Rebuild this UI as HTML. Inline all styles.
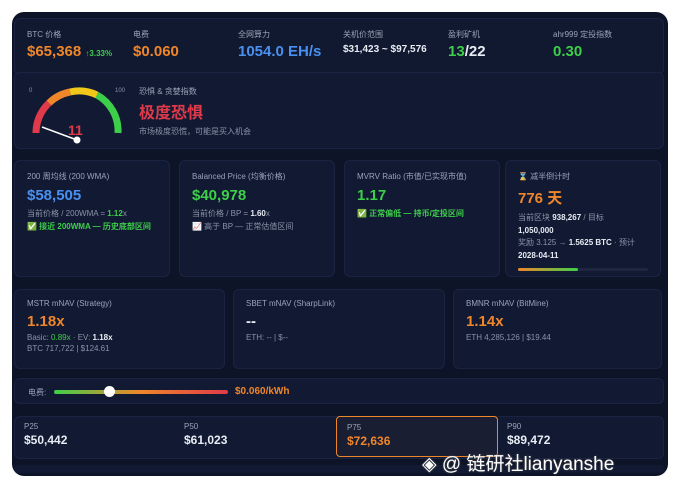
<!DOCTYPE html><html><head><meta charset="utf-8"><style>
*{box-sizing:border-box;margin:0;padding:0}
body{width:680px;height:489px;background:#fff;font-family:"Liberation Sans","Noto Sans CJK SC",sans-serif;position:relative;overflow:hidden}
.wrap{position:absolute;left:12px;top:12px;width:656px;height:464px;background:#0e1428;border-radius:12px}
.card{position:absolute;background:#121a33;border:1px solid #1a2442;border-radius:6px}
.lbl{font-size:8px;color:#9aa3b8}
.s{font-size:8px;color:#8a93a8}
.w{color:#e8ecf4;font-weight:bold}
.o{color:#f0862a}.g{color:#3ecf4a}.b{color:#4a90f0}.r{color:#e03a4a}
.big{font-size:15px;font-weight:bold}
.ab{position:absolute}
</style></head><body>
<div class="wrap">
<div class="card" style="left:2px;top:6px;width:650px;height:57px;background:#111930">
 <div class="ab" style="left:12px;top:10px"><div class="lbl">BTC 价格</div><div class="big o" style="margin-top:3px">$65,368 <span class="g" style="font-size:8px">↑3.33%</span></div></div>
 <div class="ab" style="left:118px;top:10px"><div class="lbl">电费</div><div class="big o" style="margin-top:3px">$0.060</div></div>
 <div class="ab" style="left:223px;top:10px"><div class="lbl">全网算力</div><div class="big b" style="margin-top:3px">1054.0 EH/s</div></div>
 <div class="ab" style="left:328px;top:10px"><div class="lbl">关机价范围</div><div class="w" style="font-size:10px;margin-top:4px">$31,423 ~ $97,576</div></div>
 <div class="ab" style="left:433px;top:10px"><div class="lbl">盈利矿机</div><div class="big" style="margin-top:3px"><span class="g">13</span><span class="w">/22</span></div></div>
 <div class="ab" style="left:538px;top:10px"><div class="lbl">ahr999 定投指数</div><div class="big g" style="margin-top:3px">0.30</div></div>
</div>
<div class="card" style="left:2px;top:60px;width:650px;height:77px">
 <svg class="ab" style="left:0;top:0" width="130" height="76">
  <g fill="none" stroke-width="7">
   <path d="M21 60 A41 41 0 0 1 34 30" stroke="#e03a4a"/>
   <path d="M34 30 A41 41 0 0 1 55 19" stroke="#f0862a"/>
   <path d="M55 19 A41 41 0 0 1 82 22" stroke="#f0c81a"/>
   <path d="M82 22 A41 41 0 0 1 103 60" stroke="#3ecf4a"/>
  </g>
  <line x1="27" y1="54" x2="62" y2="67" stroke="#fff" stroke-width="1.5"/>
  <circle cx="62" cy="67" r="3.5" fill="#fff"/>
  <text x="14" y="19" font-size="6" fill="#8a93a8" font-family="Liberation Sans">0</text>
  <text x="100" y="19" font-size="6" fill="#8a93a8" font-family="Liberation Sans">100</text>
  <text x="53" y="62" font-size="14" font-weight="bold" fill="#e03a4a" font-family="Liberation Sans">11</text>
 </svg>
 <div class="ab" style="left:124px;top:13px"><div class="lbl">恐惧 &amp; 贪婪指数</div><div class="r" style="font-size:16px;font-weight:bold;margin-top:2px">极度恐惧</div><div class="s" style="margin-top:3px">市场极度恐慌，可能是买入机会</div></div>
</div>
<div class="card" style="left:2px;top:148px;width:156px;height:117px;padding:10px 12px">
 <div class="lbl">200 周均线 (200 WMA)</div><div class="big b" style="margin-top:5px">$58,505</div>
 <div class="s" style="margin-top:4px">当前价格 / 200WMA = <span class="g" style="font-weight:bold">1.12</span>x</div>
 <div class="g" style="font-size:8px;font-weight:bold;margin-top:2px">✅ 接近 200WMA — 历史底部区间</div></div>
<div class="card" style="left:167px;top:148px;width:156px;height:117px;padding:10px 12px">
 <div class="lbl">Balanced Price (均衡价格)</div><div class="big g" style="margin-top:5px">$40,978</div>
 <div class="s" style="margin-top:4px">当前价格 / BP = <span class="w">1.60</span>x</div>
 <div class="s" style="margin-top:2px">📈 高于 BP — 正常估值区间</div></div>
<div class="card" style="left:332px;top:148px;width:156px;height:117px;padding:10px 12px">
 <div class="lbl">MVRV Ratio (市值/已实现市值)</div><div class="big g" style="margin-top:5px">1.17</div>
 <div class="g" style="font-size:8px;font-weight:bold;margin-top:4px">✅ 正常偏低 — 持币/定投区间</div></div>
<div class="card" style="left:493px;top:148px;width:156px;height:117px;padding:10px 12px">
 <div class="lbl">⌛ 减半倒计时</div><div class="big o" style="margin-top:5px">776 天</div>
 <div class="s" style="margin-top:4px;line-height:12.5px">当前区块 <span class="w">938,267</span> / 目标<br><span class="w">1,050,000</span><br>奖励 3.125 → <span class="w">1.5625 BTC</span> · 预计<br><span class="w">2028-04-11</span></div>
 <div style="margin-top:6px;height:3px;width:130px;background:#1e2640;border-radius:2px"><div style="width:60px;height:3px;border-radius:2px;background:linear-gradient(90deg,#f0862a,#3ecf4a)"></div></div></div>
<div class="card" style="left:2px;top:277px;width:211px;height:80px;padding:9px 12px">
 <div class="lbl">MSTR mNAV (Strategy)</div><div class="big o" style="margin-top:5px">1.18x</div>
 <div class="s" style="margin-top:3px">Basic: <span class="g">0.89x</span> · EV: <span class="w">1.18x</span></div><div class="s" style="margin-top:2px">BTC 717,722 | $124.61</div></div>
<div class="card" style="left:221px;top:277px;width:212px;height:80px;padding:9px 12px">
 <div class="lbl">SBET mNAV (SharpLink)</div><div class="big w" style="margin-top:5px">--</div>
 <div class="s" style="margin-top:3px">ETH: -- | $--</div></div>
<div class="card" style="left:441px;top:277px;width:209px;height:80px;padding:9px 12px">
 <div class="lbl">BMNR mNAV (BitMine)</div><div class="big o" style="margin-top:5px">1.14x</div>
 <div class="s" style="margin-top:3px">ETH 4,285,126 | $19.44</div></div>
<div class="card" style="left:2px;top:366px;width:650px;height:26px">
 <span class="ab lbl" style="left:13px;top:8px">电费:</span>
 <div class="ab" style="left:39px;top:11px;width:174px;height:4px;border-radius:2px;background:linear-gradient(90deg,#3ecf4a,#f0862a 50%,#e03a4a)"></div>
 <div class="ab" style="left:89px;top:7px;width:11px;height:11px;border-radius:50%;background:#fff"></div>
 <span class="ab o" style="left:220px;top:7px;font-size:10px;font-weight:bold">$0.060/kWh</span>
</div>
<div class="card" style="left:2px;top:404px;width:650px;height:43px"></div>
<div class="ab" style="left:12px;top:410px"><div class="lbl">P25</div><div class="w" style="font-size:12px;margin-top:2px">$50,442</div></div>
<div class="ab" style="left:172px;top:410px"><div class="lbl">P50</div><div class="w" style="font-size:12px;margin-top:2px">$61,023</div></div>
<div class="ab" style="left:324px;top:404px;width:162px;height:41px;border:1.5px solid #f0862a;border-radius:4px;background:#1a1e33;padding:6px 10px"><div class="lbl">P75</div><div class="o" style="font-size:12px;font-weight:bold;margin-top:2px">$72,636</div></div>
<div class="ab" style="left:495px;top:410px"><div class="lbl">P90</div><div class="w" style="font-size:12px;margin-top:2px">$89,472</div></div>
<div class="ab" style="left:2px;top:453px;width:650px;height:8px;background:#121a33;border-radius:4px"></div>
</div>
<div class="ab" style="left:422px;top:449px;font-size:19px;color:#fff;text-shadow:0 0 2px #555">◈ @ 链研社lianyanshe</div>
</body></html>
